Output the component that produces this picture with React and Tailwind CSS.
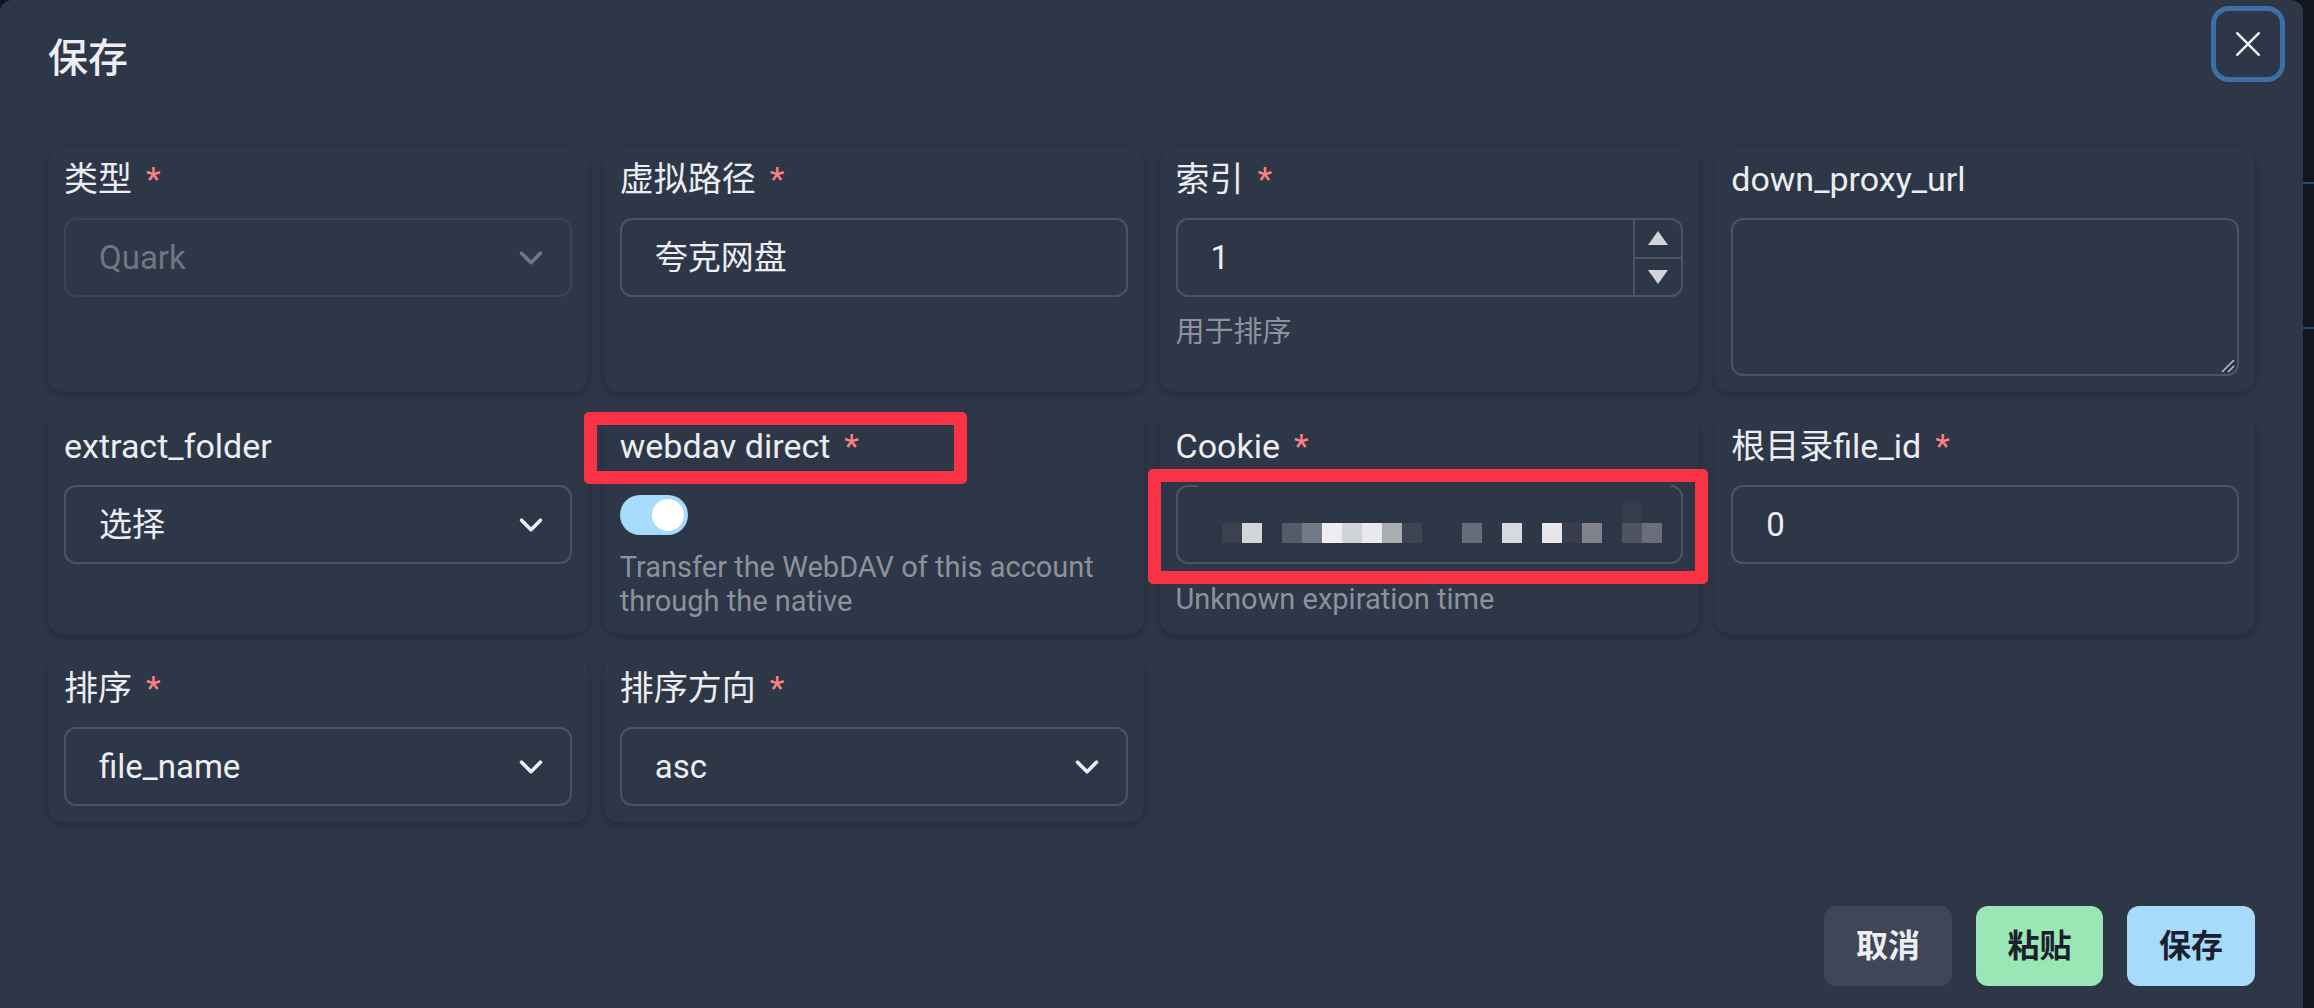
import React from "react";

const mosaic = [
  "bg-[#2f3546]", "bg-[#3b414e]", "bg-[#d5d6da]", "", "bg-[#555b67]", "bg-[#737985]",
  "bg-[#eeeef0]", "bg-[#d2d3d7]", "bg-[#e9e9eb]", "bg-[#a9acb3]", "bg-[#3e4451]", "", "",
  "bg-[#676c78]", "", "bg-[#d8d9dc]", "", "bg-[#e7e7ea]", "bg-[#373d4a]", "bg-[#80838b]", "",
  "bg-[#4d5361]", "bg-[#6b6f7a]",
];

function Chevron({ muted }) {
  return (
    <svg
      className="absolute right-[21px] top-1/2 -translate-y-1/2"
      width="36"
      height="36"
      viewBox="0 0 24 24"
      fill="none"
      stroke={muted ? "#6f7682" : "#eceef1"}
      strokeWidth="2.4"
      strokeLinecap="round"
      strokeLinejoin="round"
    >
      <path d="M5.7 8.8 12 15.1l6.3-6.3" />
    </svg>
  );
}

function Card({ children }) {
  return (
    <div className="rounded-[15px] bg-[#2d3748] px-4 pb-4 pt-[14px] shadow-[0_3px_8px_rgba(0,0,0,0.22)]">
      {children}
    </div>
  );
}

function Label({ text, required }) {
  return (
    <div className="mb-[21px] flex text-[34px] font-normal leading-[36px] text-[#ecedf0]">
      <span>{text}</span>
      {required && <span className="ml-[14px] text-[#fc8181]">*</span>}
    </div>
  );
}

function Helper({ children, className = "" }) {
  return <p className={`text-[29px] leading-[34px] text-[#8c929d] ${className}`}>{children}</p>;
}

function Select({ value, disabled }) {
  return (
    <div
      className={`relative flex h-[79px] items-center rounded-[12px] border-2 px-[33px] text-[33px] ${
        disabled ? "border-[#3b4353] text-[#6f7682]" : "border-[#4b5463] text-[#eceef1]"
      }`}
    >
      {value}
      <Chevron muted={disabled} />
    </div>
  );
}

function TextBox({ value }) {
  return (
    <div className="flex h-[79px] items-center rounded-[12px] border-2 border-[#4b5463] px-[33px] text-[33px] text-[#eceef1]">
      {value}
    </div>
  );
}

export default function App() {
  return (
    <div className="relative flex h-[1008px] w-full overflow-hidden bg-[#12161f] font-['Roboto','Noto_Sans_CJK_SC',sans-serif]">
      <div className="relative h-[1040px] w-[2303px] shrink-0 rounded-t-[12px] bg-[#2d3748] px-12">
        <h1 className="pt-[31px] text-[40px] font-medium leading-[56px] text-[#eceef1]">保存</h1>

        <button className="absolute right-[18px] top-[6px] flex h-[76px] w-[74px] items-center justify-center rounded-[18px] border-[5px] border-[#3c6fa6]">
          <svg width="26" height="26" viewBox="0 0 24 24" fill="none" stroke="#f2f3f5" strokeWidth="2.2" strokeLinecap="round">
            <path d="M2 2l20 20M22 2 2 22" />
          </svg>
        </button>

        <div className="mt-[60px] grid grid-cols-4 gap-x-4 gap-y-[22px]">
          <Card>
            <Label text="类型" required />
            <Select value="Quark" disabled />
          </Card>

          <Card>
            <Label text="虚拟路径" required />
            <TextBox value="夸克网盘" />
          </Card>

          <Card>
            <Label text="索引" required />
            <div className="flex h-[79px] rounded-[12px] border-2 border-[#4b5463] text-[33px] text-[#eceef1]">
              <div className="flex flex-1 items-center px-[33px]">1</div>
              <div className="flex w-[48px] flex-col border-l-2 border-[#4b5463]">
                <div className="flex flex-1 items-center justify-center border-b-2 border-[#4b5463]">
                  <svg width="20" height="14" viewBox="0 0 20 14">
                    <path d="M10 0 20 14H0z" fill="#d4d5d9" />
                  </svg>
                </div>
                <div className="flex flex-1 items-center justify-center">
                  <svg width="20" height="14" viewBox="0 0 20 14">
                    <path d="M0 0h20L10 14z" fill="#d4d5d9" />
                  </svg>
                </div>
              </div>
            </div>
            <Helper className="mt-[18px]">用于排序</Helper>
          </Card>

          <Card>
            <Label text="down_proxy_url" />
            <div className="relative h-[158px] rounded-[12px] border-2 border-[#4b5463]">
              <svg className="absolute bottom-[1px] right-[2px]" width="16" height="16" viewBox="0 0 16 16" stroke="#c9cacd" strokeWidth="1.4">
                <path d="M15 3 3 15M15 9 9 15" />
              </svg>
            </div>
          </Card>

          <Card>
            <Label text="extract_folder" />
            <Select value="选择" />
          </Card>

          <Card>
            <Label text="webdav direct" required />
            <div className="pt-[10px]">
              <div className="flex h-[40px] w-[68px] items-center justify-end rounded-full bg-[#a7dbfa] pr-[4px]">
                <div className="h-[32px] w-[32px] rounded-full bg-white" />
              </div>
            </div>
            <Helper className="mt-[15px]">Transfer the WebDAV of this account through the native</Helper>
          </Card>

          <Card>
            <Label text="Cookie" required />
            <div className="relative h-[79px] rounded-[12px] border-2 border-[#4b5463]">
              <div className="absolute -top-[2px] left-[20px] right-[10px] h-[2px] bg-[#2d3748]" />
              <div className="absolute left-[24px] top-[16px] h-[20px] w-[20px] translate-x-[420px] bg-[#363c4a]" />
              <div className="absolute left-[24px] top-[36px] flex">
                {mosaic.map((c, i) => (
                  <div key={i} className={`h-[20px] w-[20px] ${c}`} />
                ))}
              </div>
            </div>
            <Helper className="mt-[18px]">Unknown expiration time</Helper>
          </Card>

          <Card>
            <Label text="根目录file_id" required />
            <TextBox value="0" />
          </Card>

          <Card>
            <Label text="排序" required />
            <Select value="file_name" />
          </Card>

          <Card>
            <Label text="排序方向" required />
            <Select value="asc" />
          </Card>
        </div>

        <div className="mt-[84px] flex justify-end gap-6 text-[32px] font-semibold">
          <button className="h-[80px] w-[128px] rounded-[12px] bg-[#3e4657] text-[#eceef1]">取消</button>
          <button className="h-[80px] w-[127px] rounded-[12px] bg-[#9ae6b4] text-[#1a202c]">粘贴</button>
          <button className="h-[80px] w-[128px] rounded-[12px] bg-[#a7dbfa] text-[#1a202c]">保存</button>
        </div>
      </div>

      <div className="flex-1 pt-[182px]">
        <div className="h-[2px] bg-[#1d4b73]" />
        <div className="mt-[143px] h-[2px] bg-[#1d4b73]" />
      </div>

      <div className="pointer-events-none absolute left-[584px] top-[412px] h-[72px] w-[383px] rounded-[5px] border-[13px] border-[#f93345]" />
      <div className="pointer-events-none absolute left-[1148px] top-[469px] h-[115px] w-[560px] rounded-[5px] border-[13px] border-[#f93345]" />
    </div>
  );
}
